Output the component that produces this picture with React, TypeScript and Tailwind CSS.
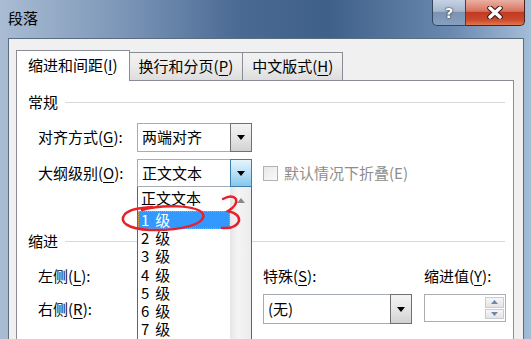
import React from 'react';

// 段落对话框（Win7 风格）
const Mn = ({ t, k, colon = true }: { t: string; k: string; colon?: boolean }) => (
  <span className="whitespace-nowrap">
    {t}(<span className="underline decoration-1 underline-offset-[3px]">{k}</span>){colon ? ':' : ''}
  </span>
);

const Tri = ({ color = '#000' }: { color?: string }) => (
  <svg width="8" height="5" viewBox="0 0 8 5">
    <path d="M0 0h8L4 5z" fill={color} />
  </svg>
);

const Combo = ({ value, focused = false }: { value: string; focused?: boolean }) => (
  <div className="flex h-full w-full">
    <div className="flex flex-1 items-center border border-r-0 border-[#a5acb5] bg-white pl-[4px]">{value}</div>
    <div
      className={
        focused
          ? 'flex w-[22px] items-center justify-center border border-[#3c7fb1] bg-[linear-gradient(#e5f4fc,#b9e0f6_50%,#86c6ec)]'
          : 'flex w-[22px] items-center justify-center border border-[#707070] bg-[linear-gradient(#f4f4f4,#e6e6e6_50%,#d2d2d2)]'
      }
    >
      <Tri />
    </div>
  </div>
);

const SectionTitle = ({ children }: { children: React.ReactNode }) => (
  <div className="flex h-[18px] items-center pl-[11px] pr-[8px]">
    <span>{children}</span>
    <div className="ml-[7px] h-px flex-1 bg-[#d5d9de]" />
  </div>
);

const levels = ['2', '3', '4', '5', '6', '7'];

const Level = ({ n }: { n: string }) => (
  <span className="flex gap-[6px]">
    <span>{n}</span>
    <span>级</span>
  </span>
);

const DropList = () => (
  <div className="absolute left-0 top-full z-20 flex h-[170px] w-[115px] border-l border-r border-[#646464] bg-white leading-[18px]">
    <div className="flex-1 overflow-hidden">
      <div className="mt-[2px] flex h-[18px] items-center pl-[3px]">正文文本</div>
      <div className="mt-[4px] flex h-[18.2px] items-center border border-dotted border-[#e0a050] bg-[#3399ff] pl-[2px] text-white">
        <Level n="1" />
      </div>
      {levels.map(l => (
        <div key={l} className="flex h-[18.2px] items-center pl-[3px]">
          <Level n={l} />
        </div>
      ))}
    </div>
    <div className="flex w-[21px] flex-col items-center bg-[linear-gradient(90deg,#e6e6e6,#f4f4f4_40%,#ececec)]">
      <div className="mt-[11px] leading-none">
        <svg width="8" height="5" viewBox="0 0 8 5">
          <path d="M0 5h8L4 0z" fill="#8a8a8a" />
        </svg>
      </div>
    </div>
  </div>
);

export default function App() {
  return (
    <div className="relative flex h-[339px] w-[531px] flex-col overflow-hidden bg-[linear-gradient(90deg,#a9bcd3_0%,#7e98b9_22%,#4a6a94_45%,#3f6089_62%,#6a89b0_85%,#a4bdd8_100%)] font-['Noto_Sans_CJK_SC','Noto_Sans',sans-serif] text-[15px] text-black">
      {/* Title bar */}
      <div className="flex h-[38px] items-start justify-between">
        <div className="self-center pl-[8px] pb-[2px] text-[15px]">段落</div>
        <div className="mr-[6px] flex">
          <div className="flex h-[26px] w-[34px] items-center justify-center rounded-bl-[5px] border border-t-0 border-[#34465d] bg-[linear-gradient(#c5d2e2,#a6b8cf_45%,#7c93b2_50%,#86a0c0)]">
            <span className="font-['DejaVu_Sans',sans-serif] text-[14px] font-bold leading-none text-white [text-shadow:0_0_2px_#1c2a3c,0_0_1px_#1c2a3c]">?</span>
          </div>
          <div className="flex h-[26px] w-[59px] items-center justify-center rounded-br-[5px] border border-l-0 border-t-0 border-[#4b231d] bg-[linear-gradient(#eab0a3,#d8725f_45%,#c13b22_50%,#cc4a2c_80%,#e0774f)]">
            <svg width="16" height="13" viewBox="0 0 16 13">
              <path d="M3 2l10 9M13 2L3 11" stroke="#3a1410" strokeWidth="5.5" strokeLinecap="round" />
              <path d="M3 2l10 9M13 2L3 11" stroke="#fff" strokeWidth="3.5" strokeLinecap="round" />
            </svg>
          </div>
        </div>
      </div>

      {/* Client area */}
      <div className="ml-[8px] mr-[7px] flex flex-1 flex-col border border-b-0 border-[#5d6d80] bg-[#f0f0f0] pt-[11px]">
        {/* Tabs */}
        <div className="relative z-10 -mb-px ml-[7px] flex h-[31px] items-end">
          <div className="flex h-[31px] items-center border border-b-0 border-[#898c95] bg-white px-[11px] pb-[2px]">
            <Mn t="缩进和间距" k="I" colon={false} />
          </div>
          <div className="mb-px flex h-[28px] items-center border border-b-0 border-l-0 border-[#898c95] bg-[linear-gradient(#f2f2f2,#ebebeb_50%,#dddddd)] px-[9px]">
            <Mn t="换行和分页" k="P" colon={false} />
          </div>
          <div className="mb-px flex h-[28px] items-center border border-b-0 border-l-0 border-[#898c95] bg-[linear-gradient(#f2f2f2,#ebebeb_50%,#dddddd)] px-[9px]">
            <Mn t="中文版式" k="H" colon={false} />
          </div>
        </div>

        {/* Panel */}
        <div className="ml-[7px] mr-[9px] flex flex-1 flex-col border border-b-0 border-[#898c95] bg-white">
          <div className="mt-[12px]">
            <SectionTitle>常规</SectionTitle>
          </div>

          <div className="mt-[12px] flex h-[29px] items-center pl-[21px]">
            <div className="w-[99px]">
              <Mn t="对齐方式" k="G" />
            </div>
            <div className="h-full w-[115px]">
              <Combo value="两端对齐" />
            </div>
          </div>

          <div className="mt-[7px] flex h-[28px] items-center pl-[21px]">
            <div className="w-[99px]">
              <Mn t="大纲级别" k="O" />
            </div>
            <div className="relative h-full w-[115px]">
              <Combo value="正文文本" focused />
              <DropList />
            </div>
            <div className="ml-[11px] h-[15px] w-[15px] border border-[#b1b1b1] bg-[linear-gradient(135deg,#e8e8e8,#fafafa)]" />
            <div className="ml-[6px] text-[#8d8d8d]">默认情况下折叠(E)</div>
          </div>

          <div className="mt-[45px]">
            <SectionTitle>缩进</SectionTitle>
          </div>

          <div className="mt-[16px] flex h-[20px] items-center pl-[21px]">
            <div className="w-[225px]">
              <Mn t="左侧" k="L" />
            </div>
            <div className="w-[161px]">
              <Mn t="特殊" k="S" />
            </div>
            <div>
              <Mn t="缩进值" k="Y" />
            </div>
          </div>

          <div className="mt-[8px] flex h-[30px] items-center pl-[21px]">
            <div className="w-[225px]">
              <Mn t="右侧" k="R" />
            </div>
            <div className="h-full w-[149px]">
              <Combo value="(无)" />
            </div>
            <div className="ml-[12px] flex h-[28px] w-[82px] self-start border border-[#abadb3] bg-white">
              <div className="flex-1" />
              <div className="my-[2px] mr-[1px] flex w-[19px] flex-col gap-px">
                <div className="flex flex-1 items-center justify-center border border-[#c8ccd2] bg-[linear-gradient(#f6f6f6,#e4e4e4)]">
                  <svg width="7" height="4" viewBox="0 0 7 4">
                    <path d="M0 4h7L3.5 0z" fill="#6e84b4" />
                  </svg>
                </div>
                <div className="flex flex-1 items-center justify-center border border-[#c8ccd2] bg-[linear-gradient(#f6f6f6,#e4e4e4)]">
                  <svg width="7" height="4" viewBox="0 0 7 4">
                    <path d="M0 0h7L3.5 4z" fill="#6e84b4" />
                  </svg>
                </div>
              </div>
            </div>
          </div>
        </div>
      </div>

      {/* 红笔标注 */}
      <svg className="pointer-events-none absolute inset-0 z-30" width="531" height="339" viewBox="0 0 531 339">
        <path
          d="M142 210 C162 204 198 205 203 214 C207 224 180 231 150 230 C128 229 118 222 125 214 C130 209 140 208 152 207"
          fill="none"
          stroke="#e8202a"
          strokeWidth="2.5"
          strokeLinecap="round"
        />
        <path
          d="M223 199 Q232 194 236 199 Q238 205 228 211 Q240 214 239 221 Q236 229 222 228"
          fill="none"
          stroke="#e8202a"
          strokeWidth="2.5"
          strokeLinecap="round"
        />
      </svg>
    </div>
  );
}
